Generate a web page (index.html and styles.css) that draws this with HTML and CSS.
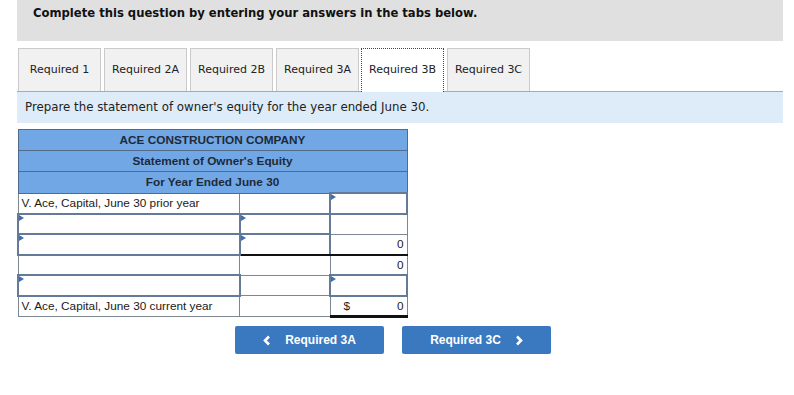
FILE: index.html
```html
<!DOCTYPE html>
<html>
<head>
  <title>Required 3B</title>
  <link rel="stylesheet" href="styles.css">
</head>
<body>
  <div class="page">
    <div class="banner">Complete this question by entering your answers in the tabs below.</div>

    <div class="tabs">
      <div class="tab">Required 1</div>
      <div class="tab">Required 2A</div>
      <div class="tab">Required 2B</div>
      <div class="tab">Required 3A</div>
      <div class="tab active">Required 3B</div>
      <div class="tab">Required 3C</div>
    </div>

    <div class="prompt">Prepare the statement of owner's equity for the year ended June 30.</div>

    <table class="sheet">
      <tr><th colspan="3">ACE CONSTRUCTION COMPANY</th></tr>
      <tr><th colspan="3">Statement of Owner's Equity</th></tr>
      <tr><th colspan="3">For Year Ended June 30</th></tr>
      <tr>
        <td class="label">V. Ace, Capital, June 30 prior year</td>
        <td class="mid"></td>
        <td class="amt entry"></td>
      </tr>
      <tr>
        <td class="label entry"></td>
        <td class="mid entry"></td>
        <td class="amt"></td>
      </tr>
      <tr>
        <td class="label entry"></td>
        <td class="mid entry underline"></td>
        <td class="amt num underline">0</td>
      </tr>
      <tr>
        <td class="label"></td>
        <td class="mid"></td>
        <td class="amt num">0</td>
      </tr>
      <tr>
        <td class="label entry"></td>
        <td class="mid"></td>
        <td class="amt entry"></td>
      </tr>
      <tr>
        <td class="label">V. Ace, Capital, June 30 current year</td>
        <td class="mid"></td>
        <td class="amt num total"><span class="cur">$</span>0</td>
      </tr>
    </table>

    <div class="nav">
      <button class="nav-btn">
        <svg width="8" height="11" viewBox="0 0 8 11"><path d="M6 1.5 L2 5.5 L6 9.5" fill="none" stroke="#fff" stroke-width="2.6"/></svg>
        <span>Required 3A</span>
      </button>
      <button class="nav-btn">
        <span>Required 3C</span>
        <svg width="8" height="11" viewBox="0 0 8 11"><path d="M2 1.5 L6 5.5 L2 9.5" fill="none" stroke="#fff" stroke-width="2.6"/></svg>
      </button>
    </div>
  </div>
</body>
</html>
```

FILE: styles.css
```css
/* Question panel */
body {
  margin: 0;
  background-color: #fff;
  font-family: "DejaVu Sans", Verdana, sans-serif;
  color: #222;
}

.page {
  width: 766px;
  margin-left: 17px;
}

.banner {
  height: 41px;
  box-sizing: border-box;
  padding: 6px 0 0 16px;
  background-color: #e0e0e0;
  font-size: 11.6px;
  font-weight: bold;
  color: #111;
}

/* Tabs */
.tabs {
  display: flex;
  gap: 3px;
  margin-top: 7px;
  padding-left: 1px;
  height: 43px;
  border-bottom: 1px solid #a3abb4;
}

.tab {
  width: 83px;
  box-sizing: border-box;
  border: 1px solid #cacaca;
  border-bottom: none;
  background-color: #f1f1f1;
  font-size: 11px;
  line-height: 42px;
  text-align: center;
  color: #222;
}

.tab.active {
  height: 44px;
  margin-left: -1px;
  background-color: #fff;
  border: 1px dotted #444;
  border-bottom: none;
}

.prompt {
  height: 31px;
  padding-left: 8px;
  background-color: #deebf8;
  font-size: 11.8px;
  line-height: 31px;
  color: #222;
}

/* Statement table */
.sheet {
  margin-top: 6px;
  width: 391px;
  border-collapse: collapse;
  font-family: "Liberation Sans", Arial, sans-serif;
  font-size: 11.8px;
}

.sheet th {
  height: 20px;
  padding: 0;
  background-color: #72a7e6;
  border: 1px solid #526b8c;
  font-weight: bold;
  color: #1d2a38;
}

.sheet td {
  height: 18.5px;
  padding: 0 3px;
  line-height: 16px;
  border: 1px solid #7d8792;
  position: relative;
}

.sheet .label {
  width: 217px;
  color: #1a1a1a;
}

.sheet .mid {
  width: 84px;
}

.sheet .amt {
  width: 70px;
}

.sheet td.entry {
  border: 2px solid #637b99;
}

.sheet td.entry::before {
  content: "";
  position: absolute;
  left: 0;
  top: 0;
  border-left: 5px solid #3d6fb3;
  border-top: 3px solid transparent;
  border-bottom: 3px solid transparent;
}

.sheet td.num {
  text-align: right;
}

.sheet td.underline {
  border-bottom: 2px solid #111;
}

.sheet td.total {
  border-bottom: 3px solid #111;
}

.cur {
  float: left;
  margin-left: 10px;
}

/* Navigation buttons */
.nav {
  display: flex;
  gap: 18px;
  margin-top: 8px;
  padding-left: 218px;
}

.nav-btn {
  display: flex;
  align-items: center;
  justify-content: center;
  gap: 14px;
  width: 149px;
  height: 28px;
  border: none;
  border-radius: 2px;
  background-color: #3a78bf;
  color: #fff;
  font-family: "Liberation Sans", Arial, sans-serif;
  font-size: 12px;
  font-weight: bold;
}
```
